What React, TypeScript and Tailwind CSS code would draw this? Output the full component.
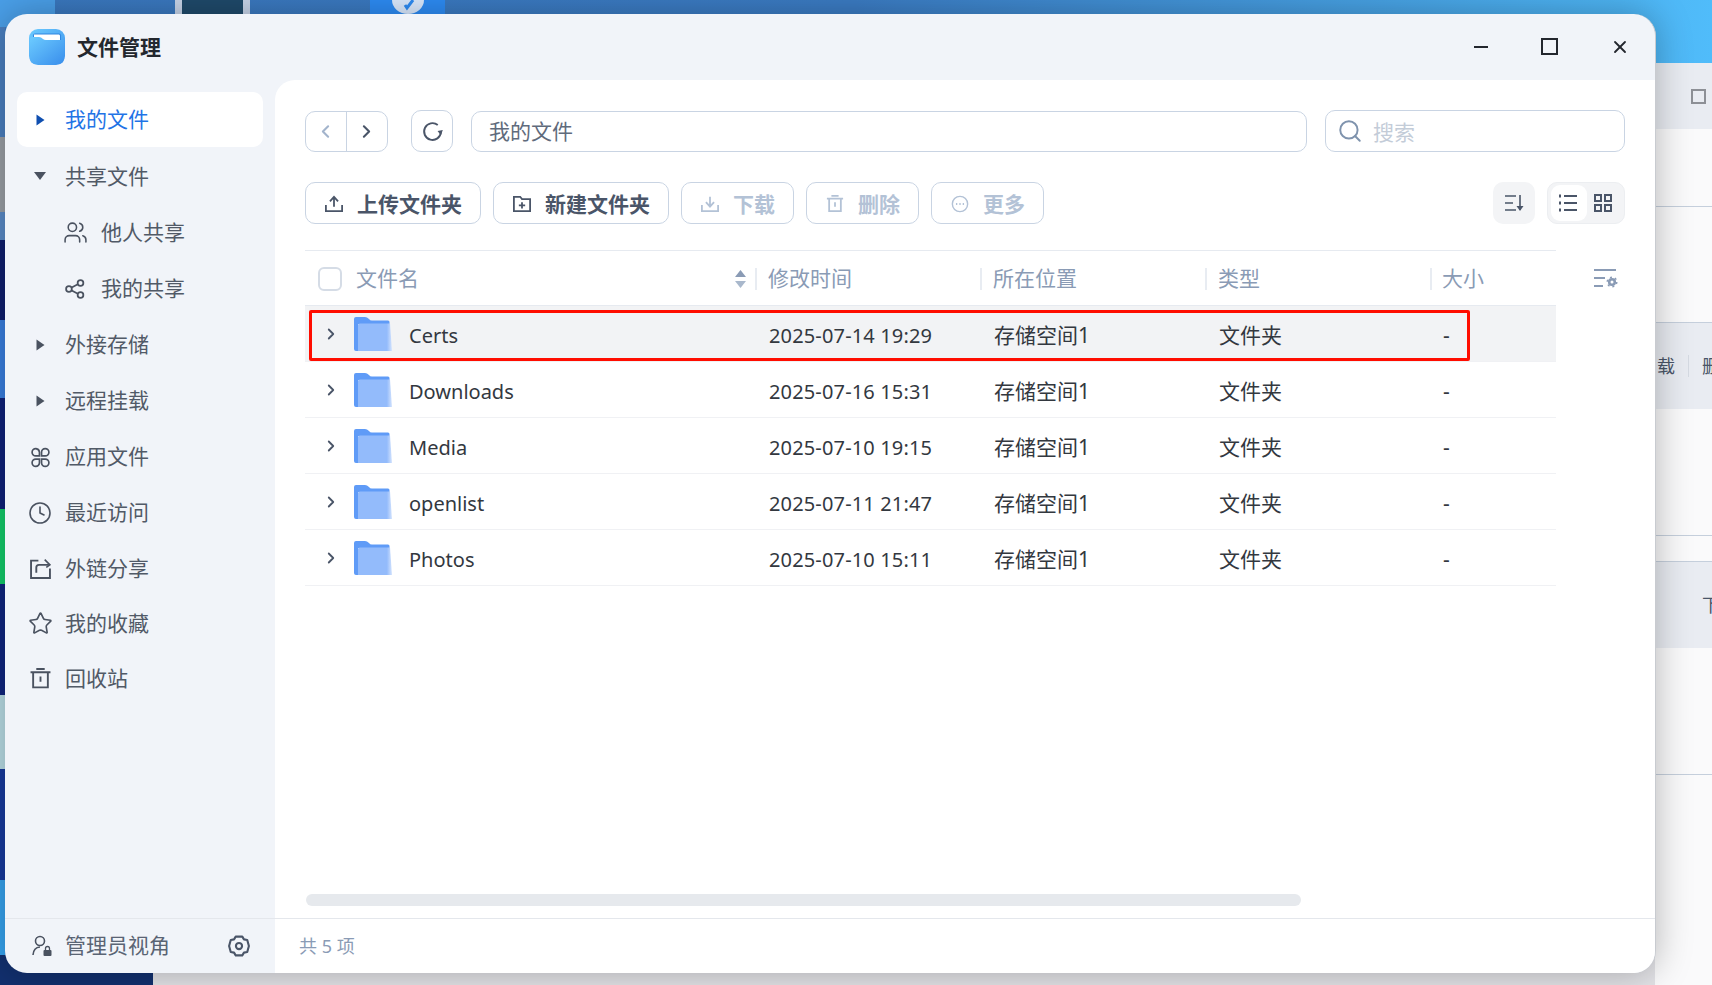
import { Clock, Search, Star, Users, ChevronLeft, ChevronRight, X } from "lucide-react"

const FILES = [
  { name: "Certs", time: "2025-07-14 19:29" },
  { name: "Downloads", time: "2025-07-16 15:31" },
  { name: "Media", time: "2025-07-10 19:15" },
  { name: "openlist", time: "2025-07-11 21:47" },
  { name: "Photos", time: "2025-07-10 15:11" },
]

function Svg({ size = 20, children, className = "" }: { size?: number; children: React.ReactNode; className?: string }) {
  return (
    <svg width={size} height={size} viewBox="0 0 20 20" fill="none" stroke="currentColor" strokeWidth="1.6" className={`shrink-0 ${className}`}>
      {children}
    </svg>
  )
}

function AppLogo() {
  return (
    <svg width="36" height="36" viewBox="0 0 36 36">
      <defs>
        <linearGradient id="logo" x1="0" y1="0" x2="1" y2="1">
          <stop offset="0" stopColor="#6ccbff" />
          <stop offset="1" stopColor="#3a8fec" />
        </linearGradient>
      </defs>
      <rect width="36" height="36" rx="9" fill="url(#logo)" />
      <path d="M4 6.500 Q4 4.500 6 4.500 H30 Q32 4.500 32 6.500 V12 H4 Z" fill="#2f86e0" />
      <path d="M5 5.500 H30 Q31 5.500 31 7 V13 H5 Z" fill="#ffffff" />
      <path d="M1 10 Q1 8 3 8 H10 Q12 8 14 10 Q15 11 17 11 H35 V29 Q35 35 29 35 H7 Q1 35 1 29 Z" fill="url(#logo)" />
    </svg>
  )
}

function FolderIcon() {
  return (
    <svg width="38" height="34" viewBox="0 0 38 34" className="shrink-0">
      <defs>
        <linearGradient id="folderFront" x1="0" y1="0" x2="1" y2="0">
          <stop offset="0" stopColor="#93bbfb" />
          <stop offset="0.85" stopColor="#93bbfb" />
          <stop offset="1" stopColor="#d5e4fd" />
        </linearGradient>
      </defs>
      <path d="M0 2 Q0 0 2 0 H11 Q13 0 15 2 Q16 3.500 18 3.500 H34 Q35.500 3.500 35.500 5 V7 H4 V34 H2 Q0 34 0 32 Z" fill="#5f9bf7" />
      <path d="M4 8 Q4 6.500 6 6.500 H36 L38 34 H4 Z" fill="url(#folderFront)" />
    </svg>
  )
}

function TriRight({ className = "" }: { className?: string }) {
  return (
    <svg width="9" height="12" viewBox="0 0 8 12" className={className}>
      <path d="M0 0.500 L8 6 L0 11.500 Z" fill="currentColor" />
    </svg>
  )
}

function SideItem({ label, icon, active, sub, tall = true }: { label: string; icon: React.ReactNode; active?: boolean; sub?: boolean; tall?: boolean }) {
  return (
    <div
      className={`flex items-center rounded-[10px] text-[21px] ${active ? "h-[55.200px] mb-[1px]" : tall ? "h-[56.200px]" : "h-[55.300px]"} ${
        sub ? "pl-[47px]" : "pl-[12px]"
      } ${active ? "bg-white text-[#1f74e6]" : "text-[#515a67]"}`}
    >
      <span className={`flex items-center justify-center w-[22px] shrink-0 text-[#4a5260] ${sub ? "mr-[15px]" : "mr-[14px]"}`}>{icon}</span>
      {label}
    </div>
  )
}

function ToolButton({ label, icon, disabled }: { label: string; icon: React.ReactNode; disabled?: boolean }) {
  return (
    <button
      className={`flex items-center gap-[14px] h-[42px] pl-[19px] pr-[18px] pt-[2px] rounded-[10px] border border-[#c9d4e3] text-[21px] font-bold ${
        disabled ? "text-[#b3c2d6]" : "text-[#4a5568]"
      }`}
    >
      {icon}
      <span className="pt-[2px]">{label}</span>
    </button>
  )
}

function Desktop() {
  return (
    <>
      {/* desktop icons peeking out at the left edge */}
      <div className="absolute left-0 top-0 w-[55px] h-[27px] bg-[#4a9fe8]" />
      <div className="absolute left-0 top-[27px] w-[5px] h-[110px] bg-[#4a7fc0]" />
      <div className="absolute left-0 top-[137px] w-[5px] h-[75px] bg-[#9a9fa6]" />
      <div className="absolute left-0 top-[212px] w-[5px] h-[28px] bg-[#5a8bc8]" />
      <div className="absolute left-0 top-[240px] w-[5px] h-[80px] bg-[#101f6e]" />
      <div className="absolute left-0 top-[320px] w-[5px] h-[78px] bg-[#3a7fe0]" />
      <div className="absolute left-0 top-[398px] w-[5px] h-[111px] bg-[#10227a]" />
      <div className="absolute left-0 top-[509px] w-[5px] h-[75px] bg-[#14cc6a]" />
      <div className="absolute left-0 top-[584px] w-[5px] h-[111px] bg-[#10267f]" />
      <div className="absolute left-0 top-[695px] w-[5px] h-[74px] bg-[#b9dde6]" />
      <div className="absolute left-0 top-[769px] w-[5px] h-[111px] bg-[#173a9e]" />
      <div className="absolute left-0 top-[880px] w-[5px] h-[75px] bg-[#36a3ef]" />
      <div className="absolute left-0 top-[955px] w-[153px] h-[30px] bg-[#12306f]" />
      {/* dock icons above the window */}
      <div className="absolute left-[175px] top-0 w-[75px] h-[40px] border-x-[7px] border-[#c8d5ea] bg-[#1f4a6b]" />
      <div className="absolute left-[370px] top-0 w-[75px] h-[14px] bg-[#2d8cf5] flex justify-center">
        <svg width="32" height="14" viewBox="0 0 32 14">
          <path d="M0 0 H32 A16 14 0 0 1 0 0 Z" fill="#dcebff" />
          <path d="M13 5 L15 8 L21 0" fill="none" stroke="#2d8cf5" strokeWidth="3" />
        </svg>
      </div>
      {/* window behind */}
      <div className="absolute left-[1655px] top-[63px] w-[57px] h-[922px] bg-[#fafafb]">
        <div className="h-[66px] bg-[#e9ecf2] flex items-center justify-end pr-[6px]">
          <div className="w-[15px] h-[15px] border-2 border-[#8d9096]" />
        </div>
        <div className="h-[78px] border-b border-[#c5cfdc]" />
        <div className="h-[115px]" />
        <div className="h-[87px] bg-[#e9ecf2] border-t border-[#c5cfdc] flex items-center text-[18px] text-[#4a5568] overflow-hidden whitespace-nowrap">
          <span className="w-[33px] shrink-0 pl-[2px]">载</span>
          <span className="h-[22px] border-l border-[#d5dae2] mr-[13px]" />
          <span>删</span>
        </div>
        <div className="h-[127px] border-b border-[#c5cfdc]" />
        <div className="h-[25px]" />
        <div className="h-[87px] bg-[#e9ecf2] border-t border-[#c5cfdc] flex items-center pl-[47px] text-[18px] text-[#4a5568] overflow-hidden whitespace-nowrap">
          下
        </div>
        <div className="h-[127px] border-b border-[#c5cfdc]" />
      </div>
      <div className="absolute left-[153px] top-[940px] w-[1502px] h-[45px] bg-[#e3e3e7]" />
    </>
  )
}

function Sidebar() {
  return (
    <div className="w-[270px] shrink-0 flex flex-col">
      <div className="flex-1 px-[12px] pt-[12px]">
        <SideItem label="我的文件" active icon={<TriRight className="text-[#0f4fb0]" />} />
        <SideItem
          label="共享文件"
          icon={
            <svg width="12" height="8" viewBox="0 0 12 8">
              <path d="M0 0 H12 L6 8 Z" fill="currentColor" />
            </svg>
          }
        />
        <SideItem label="他人共享" sub icon={<Users size={25} strokeWidth={1.5} className="shrink-0" />} />
        <SideItem
          label="我的共享"
          sub
          icon={
            <Svg size={22}>
              <circle cx="15" cy="4.500" r="2.600" />
              <circle cx="4.500" cy="10" r="2.600" />
              <circle cx="15" cy="15.500" r="2.600" />
              <path d="M7 8.700 L12.600 5.700 M7 11.300 L12.600 14.300" />
            </Svg>
          }
        />
        <SideItem label="外接存储" icon={<TriRight />} />
        <SideItem label="远程挂载" icon={<TriRight />} />
        <SideItem
          label="应用文件"
          icon={
            <Svg size={21}>
              <path d="M5.500 1.500 H5.700 A3.800 3.800 0 0 1 9 5 V8.500 H5.500 A3.500 3.500 0 0 1 5.500 1.500 Z" />
              <path d="M14.500 1.500 A3.500 3.500 0 0 1 14.500 8.500 H11 V5 A3.500 3.500 0 0 1 14.500 1.500 Z" />
              <path d="M5.500 11.500 H9 V15 A3.500 3.500 0 1 1 5.500 11.500 Z" />
              <path d="M11 11.500 H14.500 A3.500 3.500 0 1 1 11 15 Z" />
            </Svg>
          }
        />
        <SideItem label="最近访问" tall={false} icon={<Clock size={24} strokeWidth={1.6} className="shrink-0" />} />
        <SideItem
          label="外链分享"
          tall={false}
          icon={
            <Svg size={21}>
              <path d="M8 2.500 H1 V19 H19 V10 M6 14 V9 Q6 6.500 8.500 6.500 H18" strokeWidth="1.800" />
              <path d="M14 1.500 L19 6.500 L15.500 9" strokeWidth="1.500" />
            </Svg>
          }
        />
        <SideItem label="我的收藏" tall={false} icon={<Star size={25} strokeWidth={1.6} className="shrink-0" />} />
        <SideItem
          label="回收站"
          tall={false}
          icon={
            <Svg size={21}>
              <path d="M0.500 4 H19.500 M3 4 V18.500 H17 V4 M6 1 H14 M10 8 V13" strokeWidth="1.800" />
            </Svg>
          }
        />
      </div>
      <div className="h-[55px] border-t border-[#e4e7ec] flex items-center pl-[27px] pr-[25px] text-[21px] text-[#5a6474]">
        <svg width="20" height="22" viewBox="0 0 20 22" fill="none" stroke="currentColor" strokeWidth="1.600" className="mr-[13px] shrink-0 text-[#4a5260]">
          <circle cx="8" cy="6" r="4.500" />
          <path d="M1 20 Q1.500 12.500 8 12" />
          <rect x="11.500" y="15" width="8" height="6" rx="1" fill="currentColor" stroke="none" />
          <path d="M13.500 15 V13.500 A2 2 0 0 1 17.500 13.500 V15" strokeWidth="1.300" />
        </svg>
        <span>管理员视角</span>
        <svg width="22" height="22" viewBox="0 0 20 20" fill="none" stroke="#4a5568" strokeWidth="1.900" className="ml-auto">
          <path d="M7 1.500 H13 L14.500 4 L17.500 4.500 L19 10 L17.500 15.500 L14.500 16 L13 18.500 H7 L5.500 16 L2.500 15.500 L1 10 L2.500 4.500 L5.500 4 Z" strokeLinejoin="round" />
          <circle cx="10" cy="10" r="2.800" />
        </svg>
      </div>
    </div>
  )
}

function Toolbar() {
  return (
    <>
      <div className="flex items-center gap-[18px] h-[42px]">
        <div className="flex items-center w-[83px] h-[41px] rounded-[10px] border border-[#c9d4e3] shrink-0">
          <span className="flex-1 flex justify-center pr-[1px] text-[#a3b4cc]">
            <ChevronLeft size={21} strokeWidth={2.4} />
          </span>
          <span className="h-full border-l border-[#c9d4e3]" />
          <span className="flex-1 flex justify-center pr-[1px] text-[#4a5568]">
            <ChevronRight size={21} strokeWidth={2.4} />
          </span>
        </div>
        <div className="flex items-center justify-center ml-[5px] w-[42px] h-[42px] rounded-[10px] border border-[#c9d4e3] shrink-0 text-[#4a5568]">
          <Svg size={21}>
            <path d="M18 10.500 A8 8 0 1 1 15 3.800" strokeWidth="1.800" />
            <path d="M14.800 9.500 L19.800 8.500 L18 13.500 Z" fill="currentColor" stroke="none" />
          </Svg>
        </div>
        <div className="flex-1 h-[41px] rounded-[10px] border border-[#c9d4e3] flex items-center pl-[17px] pt-[1px] text-[21px] text-[#5f6b7c]">我的文件</div>
        <div className="w-[300px] h-[42px] rounded-[10px] border border-[#c9d4e3] flex items-center pl-[11px] gap-[10px] text-[21px] text-[#c3ccd8]">
          <Search size={26} strokeWidth={1.8} className="text-[#7f93ad]" />
          <span className="pt-[3px]">搜索</span>
        </div>
      </div>
      <div className="flex items-center gap-[12px] mt-[30px] h-[42px]">
        <ToolButton
          label="上传文件夹"
          icon={
            <Svg size={18}>
              <path d="M1 11 V18 H19 V11 M10 13 V3 M5.500 7 L10 2 L14.500 7" strokeWidth="2" />
            </Svg>
          }
        />
        <ToolButton
          label="新建文件夹"
          icon={
            <Svg size={18}>
              <path d="M1 2 H8 L10 4.500 H19 V18 H1 Z M10 8 V15 M6.500 11.500 H13.500" strokeWidth="2" />
            </Svg>
          }
        />
        <ToolButton
          label="下载"
          disabled
          icon={
            <Svg size={18}>
              <path d="M1 11 V18 H19 V11 M10 2 V12 M5.500 8 L10 13 L14.500 8" strokeWidth="2" />
            </Svg>
          }
        />
        <ToolButton
          label="删除"
          disabled
          icon={
            <Svg size={18}>
              <path d="M1 4 H19 M3.500 4 V18 H16.500 V4 M6 1 H14 M10 8 V13" strokeWidth="2" />
            </Svg>
          }
        />
        <ToolButton
          label="更多"
          disabled
          icon={
            <svg width="18" height="18" viewBox="0 0 20 20" fill="none" stroke="currentColor" strokeWidth="1.600">
              <circle cx="10" cy="10" r="8.500" />
              <path d="M5.500 10 H7 M9.250 10 H10.750 M13 10 H14.500" strokeWidth="2" />
            </svg>
          }
        />
        <div className="ml-auto flex items-center justify-center w-[42px] h-[42px] rounded-[10px] bg-[#f3f4f6] text-[#4a5568]">
          <Svg>
            <path d="M1 3 H12 M1 10 H9 M1 17 H12 M16 2 V17" />
            <path d="M12.500 13 H19.500 L16 18 Z" fill="currentColor" stroke="none" />
          </Svg>
        </div>
        <div className="flex items-center w-[78px] h-[42px] rounded-[10px] bg-[#f3f4f6] border border-[#eceef1] pl-[3px] text-[#4a5568]">
          <span className="flex items-center justify-center w-[36px] h-[36px] pr-[2px] rounded-[9px] bg-white">
            <Svg>
              <path d="M6 3 H19 M6 10 H19 M6 17 H19" strokeWidth="2" />
              <path d="M1 3 H3 M1 10 H3 M1 17 H3" strokeWidth="2.800" />
            </Svg>
          </span>
          <span className="flex items-center justify-center flex-1 pr-[5px]">
            <Svg>
              <path d="M2 2 H8 V8 H2 Z M12 2 H18 V8 H12 Z M2 12 H8 V18 H2 Z M12 12 H18 V18 H12 Z" strokeWidth="2" />
            </Svg>
          </span>
        </div>
      </div>
    </>
  )
}

function FileTable() {
  const head = "flex items-center border-l-2 border-[#e8ecf2] h-[22px]"
  return (
    <div className="flex mt-[26px]">
      <div className="w-[1251px] shrink-0">
        <div className="grid grid-cols-[450px_225px_225px_225px_126px] items-center h-[56px] pt-[2px] border-y border-[#e6eaf0] text-[21px] text-[#8a9bb5]">
          <div className="flex items-center pl-[13px] pr-[9px]">
            <span className="w-[24px] h-[24px] rounded-[6px] border-2 border-[#d5dce6] mr-[14px]" />
            文件名
            <svg width="11" height="20" viewBox="0 0 11 20" className="ml-auto">
              <path d="M5.500 1 L11 8 H0 Z" fill="#8a9bb5" />
              <path d="M5.500 19 L11 12 H0 Z" fill="#a9b8cc" />
            </svg>
          </div>
          <div className={`${head} pl-[11px]`}>修改时间</div>
          <div className={`${head} pl-[11px]`}>所在位置</div>
          <div className={`${head} pl-[11px]`}>类型</div>
          <div className={`${head} pl-[10px]`}>大小</div>
        </div>
        {FILES.map((f, i) => (
          <div
            key={f.name}
            className={`relative grid grid-cols-[450px_225px_225px_225px_126px] items-center h-[56px] border-b border-[#f0f1f4] text-[21px] text-[#33383f] ${
              i === 0 ? "bg-[#f2f3f5]" : ""
            }`}
          >
            <div className="flex items-center pl-[21px]">
              <ChevronRight size={18} strokeWidth={2.4} className="text-[#4a5568] w-[18px] -ml-[4px] mr-[14px] mt-[1px]" />
              <FolderIcon />
              <span className="ml-[17px] pt-[4px] text-[20px]">{f.name}</span>
            </div>
            <div className="pl-[14px] pt-[4px] text-[20px] tracking-[0.15px]">{f.time}</div>
            <div className="pl-[14px] pt-[4px]">存储空间1</div>
            <div className="pl-[14px] pt-[4px]">文件夹</div>
            <div className="pl-[13px] pt-[4px]">-</div>
            {i === 0 && <div className="absolute left-[4px] top-[4px] bottom-0 w-[1161px] border-[3px] border-[#ff0d00] rounded-[2px]" />}
          </div>
        ))}
      </div>
      <div className="pl-[37px] pt-[18px] text-[#8a9bb5]">
        <svg width="25" height="20" viewBox="0 0 25 20" fill="none" stroke="currentColor" strokeWidth="1.800">
          <path d="M1 2 H23 M1 10 H12 M1 18 H10" />
          <circle cx="19" cy="14" r="2.800" strokeWidth="2.600" />
          <circle cx="19" cy="14" r="4.800" strokeWidth="1.400" strokeDasharray="2 3" />
        </svg>
      </div>
    </div>
  )
}

export default function App() {
  return (
    <div className="relative w-[1712px] h-[985px] overflow-hidden bg-gradient-to-r from-[#3a78bf] via-[#3b7cc4] to-[#50bcfa] font-['Noto_Sans','Noto_Sans_CJK_SC',sans-serif]">
      <Desktop />
      <div className="absolute left-[5px] top-[14px] w-[1651px] h-[959px] flex flex-col rounded-[22px] bg-[#f1f4f9] overflow-hidden border-r border-[#c8cbd0] shadow-[0_0_36px_rgba(0,0,0,0.28)]">
        <div className="h-[66px] shrink-0 flex items-center pl-[24px] pb-[1px]">
          <AppLogo />
          <span className="ml-[12px] pt-[3px] text-[21px] font-bold text-[#23272e]">文件管理</span>
          <div className="ml-auto flex items-center text-[#23272e]">
            <span className="w-[14px] border-t-2 border-[#23272e] mr-[53px]" />
            <span className="w-[17px] h-[17px] border-2 border-[#23272e] mr-[52px]" />
            <X size={20} strokeWidth={2.2} className="mr-[25px]" />
          </div>
        </div>
        <div className="flex-1 flex min-h-0">
          <Sidebar />
          <div className="flex-1 flex flex-col bg-white rounded-tl-[20px] min-w-0">
            <div className="flex-1 flex flex-col pl-[30px] pr-[30px] pt-[30px] min-h-0">
              <Toolbar />
              <FileTable />
              <div className="mt-auto mb-[12px] ml-[1px] w-[995px] h-[12px] rounded-full bg-[#e6e9ed]" />
            </div>
            <div className="h-[55px] shrink-0 border-t border-[#e4e7ec] flex items-center pl-[24px] text-[18px] text-[#8a9bb5]">共 5 项</div>
          </div>
        </div>
      </div>
    </div>
  )
}
